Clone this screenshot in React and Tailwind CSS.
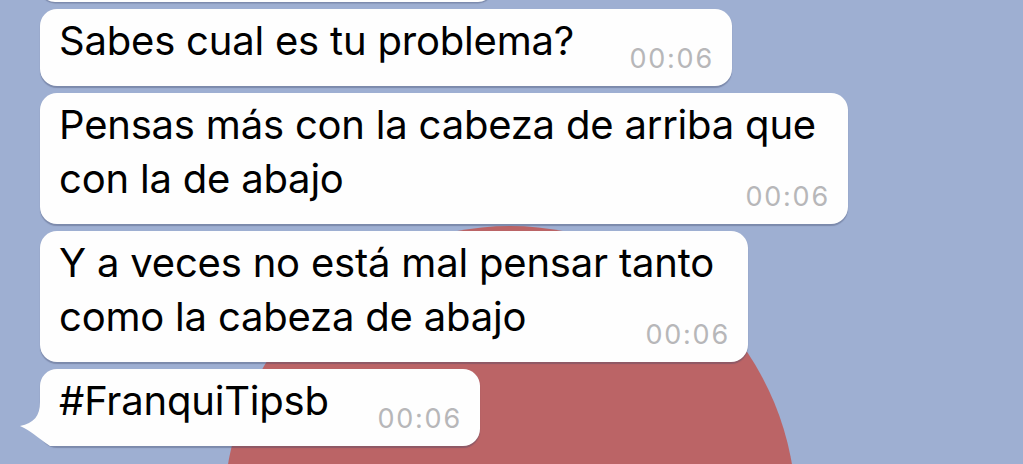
import React from "react";

const font = { fontFamily: "Inter, 'Noto Sans', sans-serif" };

function Time() {
  return (
    <span className="block shrink-0 text-[27px] leading-none text-[#b7b7b9] mb-[-4px] tracking-[1.8px]">
      00:06
    </span>
  );
}

function Bubble({ width, lines, tail }) {
  const last = lines[lines.length - 1];
  const first = lines.slice(0, -1);
  return (
    <div
      className={`relative bg-[#fefefe] rounded-[17px] shadow-[0_1.5px_1px_rgba(60,70,100,0.35)] pl-[19px] pr-[18px] pt-[5px] pb-[18px] ${width}`}
    >
      {tail && (
        <svg
          className="absolute left-[-20px] bottom-0"
          width="44"
          height="44"
          viewBox="0 0 44 44"
        >
          <path
            d="M20 0 C20 14 14 21 0 24 C10 28 18 36 30 44 L44 44 L44 0 Z"
            fill="#fefefe"
          />
        </svg>
      )}
      <div className="relative flex flex-col text-[40px] leading-[54px] text-black tracking-[-0.2px]">
        {first.map((l, i) => (
          <div key={i} className="whitespace-nowrap">
            {l}
          </div>
        ))}
        <div className="flex items-end justify-between gap-4">
          <span className="whitespace-nowrap">{last}</span>
          <Time />
        </div>
      </div>
    </div>
  );
}

export default function App() {
  return (
    <div
      className="relative w-full h-[464px] overflow-hidden bg-[#9eafd2]"
      style={font}
    >
      <div className="absolute left-[224px] top-[226px] w-[572px] h-[572px] rounded-full bg-[#bb6466]" />
      <div className="relative flex flex-col items-start gap-[7px] pl-[40px]">
        <div className="w-[453px] h-[30px] mt-[-28px] bg-[#fefefe] rounded-[17px] shadow-[0_1.5px_1px_rgba(60,70,100,0.35)]" />
        <Bubble width="w-[692px]" lines={["Sabes cual es tu problema?"]} />
        <Bubble
          width="w-[808px]"
          lines={["Pensas más con la cabeza de arriba que", "con la de abajo"]}
        />
        <Bubble
          width="w-[708px]"
          lines={["Y a veces no está mal pensar tanto", "como la cabeza de abajo"]}
        />
        <Bubble width="w-[440px]" lines={["#FranquiTipsb"]} tail />
      </div>
    </div>
  );
}
